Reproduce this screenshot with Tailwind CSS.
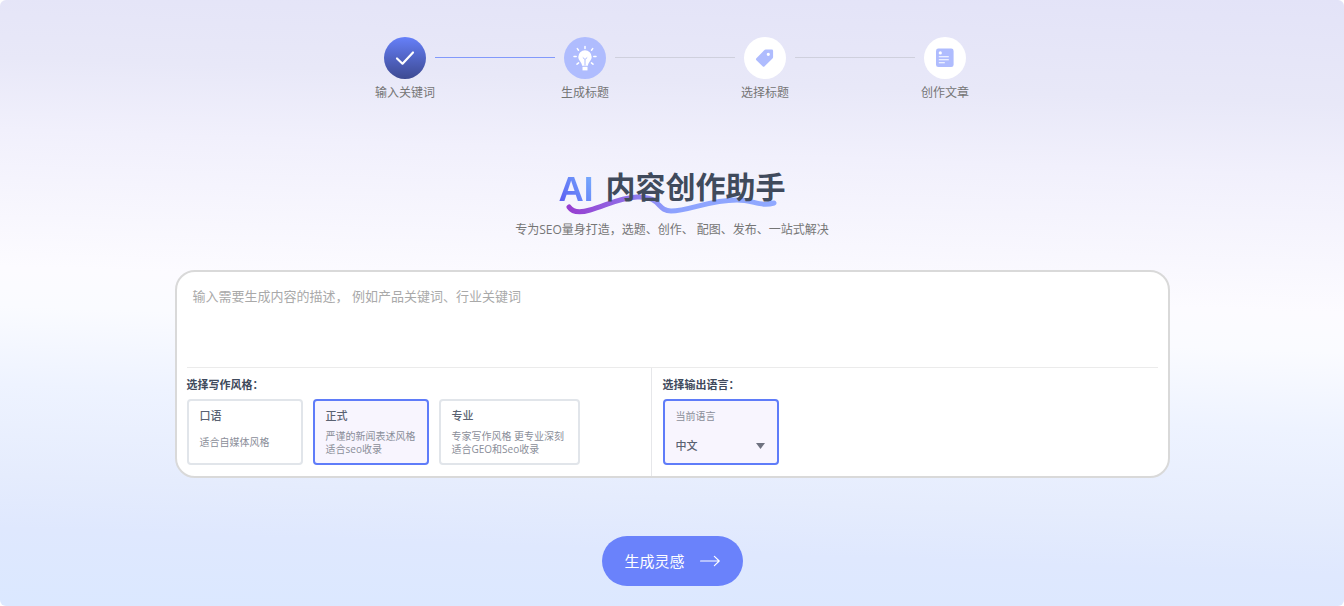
<!DOCTYPE html>
<html lang="zh-CN">
<head>
  <meta charset="UTF-8">
  <meta name="viewport" content="width=device-width, initial-scale=1.0">
  <title>AI 内容创作助手</title>
  <script src="https://cdn.jsdelivr.net/npm/@tailwindcss/browser@4"></script>
</head>
<body class="bg-white font-['Open_Sans','Noto_Sans_CJK_SC',sans-serif]">
  <main class="min-h-screen rounded-md px-6 pt-[37px] pb-5 flex flex-col items-center bg-[linear-gradient(182deg,#e3e3f8_0%,#e8e8f8_16%,#f1f0fc_27%,#fcfbff_48%,#fafbff_54%,#eef3ff_66%,#e5ecfd_80%,#dfe8fe_88%,#dbe8ff_100%)]">

    <!-- 步骤条 -->
    <ol class="flex pl-1.5 text-xs leading-4 text-[#757575]">
      <li class="w-[60px] flex flex-col items-center gap-1.5">
        <span class="size-[42px] rounded-full bg-linear-to-b from-[#6680fa] to-[#3d4a92] flex items-center justify-center">
          <svg class="size-[42px]" viewBox="0 0 42 42" fill="none" stroke="#fff" stroke-width="2.2" stroke-linecap="round" stroke-linejoin="round">
            <path d="M13 21.5l5.5 5.2L29 15.5"/>
          </svg>
        </span>
        <span class="whitespace-nowrap">输入关键词</span>
      </li>
      <li class="w-[120px] h-px mt-5 bg-[#8299fb]" aria-hidden="true"></li>
      <li class="w-[60px] flex flex-col items-center gap-1.5">
        <span class="size-[42px] rounded-full bg-[#afbcfe] flex items-center justify-center">
          <svg class="size-[42px]" viewBox="0 0 42 42" fill="none">
            <path d="M21 13.3a6.7 6.7 0 0 0-6.7 6.7c0 3.6 3.4 5 3.8 8.8h5.8c.4-3.8 3.8-5.2 3.8-8.8A6.7 6.7 0 0 0 21 13.3z" fill="#fff"/>
            <path d="M18.5 29.8h5v3.6h-5z" fill="#fff"/>
            <path d="M18.8 20.5l2.2 2 2.2-2M21 22.5v6" stroke="#afbcfe" stroke-width="1"/>
            <path d="M21 9.4v2M13.3 11.6l1.2 1.6M28.7 11.6l-1.2 1.6M10 19.6h2.2M29.8 19.6h2.2M13 27.2l1.6-1.3M29 27.2l-1.6-1.3" stroke="#fff" stroke-width="1.5" stroke-linecap="round"/>
          </svg>
        </span>
        <span class="whitespace-nowrap">生成标题</span>
      </li>
      <li class="w-[120px] h-px mt-5 bg-[#cfd0dd]" aria-hidden="true"></li>
      <li class="w-[60px] flex flex-col items-center gap-1.5">
        <span class="size-[42px] rounded-full bg-white flex items-center justify-center">
          <svg class="size-[42px]" viewBox="0 0 42 42">
            <path fill="#afbcfe" fill-rule="evenodd" d="M20.2 13.2q.6-.6 1.5-.6h6.1q1.3 0 1.3 1.3v6.2q0 .9-.6 1.5l-7.9 7.7q-1 1-2 0l-6.2-6.1q-1-1 0-2zM25.9 17.3a1.6 1.6 0 1 0-3.2 0 1.6 1.6 0 0 0 3.2 0z"/>
          </svg>
        </span>
        <span class="whitespace-nowrap">选择标题</span>
      </li>
      <li class="w-[120px] h-px mt-5 bg-[#cfd0dd]" aria-hidden="true"></li>
      <li class="w-[60px] flex flex-col items-center gap-1.5">
        <span class="size-[42px] rounded-full bg-white flex items-center justify-center">
          <svg class="size-[42px]" viewBox="0 0 42 42" fill="none">
            <rect x="12" y="11.5" width="17.6" height="18.6" rx="2.4" fill="#afbcfe"/>
            <circle cx="16.3" cy="15.9" r="1.6" fill="#fff"/>
            <path d="M14.8 19.7h10M14.8 22.7h10M14.8 25.7h6" stroke="#fff" stroke-width="1.1"/>
          </svg>
        </span>
        <span class="whitespace-nowrap">创作文章</span>
      </li>
    </ol>

    <!-- 标题 -->
    <h1 class="relative mt-[66px] flex items-center gap-3 h-10 text-[30px] leading-10 font-bold text-[#404a5c]">
      <svg class="absolute left-1 top-6 w-[216px] h-[24px]" viewBox="0 0 216 24" fill="none" aria-hidden="true">
        <defs>
          <linearGradient id="wave" x1="0" y1="0" x2="1" y2="0">
            <stop offset="0" stop-color="#973ed0"/>
            <stop offset=".25" stop-color="#9068e4"/>
            <stop offset=".5" stop-color="#8da2fe"/>
            <stop offset="1" stop-color="#90a9ff"/>
          </linearGradient>
        </defs>
        <path d="M6 16C10 22 17 22 27 19C44 14 56 7 74 6C98 5 94 20 108 20C126 20 146 9 174 9C190 9 198 16 211 12" stroke="url(#wave)" stroke-width="5" stroke-linecap="round"/>
      </svg>
      <span class="relative pt-1 font-['Liberation_Sans',sans-serif] text-[35px] bg-linear-to-tr from-[#5a50ef] to-[#7fbcff] bg-clip-text text-transparent">AI</span>
      <span class="relative">内容创作助手</span>
    </h1>
    <p class="mt-[13px] text-xs leading-5 text-[#757575]">专为SEO量身打造，选题、创作、 配图、发布、一站式解决</p>

    <!-- 输入表单 -->
    <form class="mt-[30px] w-full max-w-[995px] flex flex-col items-center">
      <div class="w-full rounded-[20px] border-2 border-[#d9d9d9] bg-white px-2.5">
        <textarea aria-label="内容描述" placeholder="输入需要生成内容的描述， 例如产品关键词、行业关键词"
                  class="block w-full h-[95px] resize-none px-1.5 pt-3 text-[13px] leading-6 text-[#404a5c] placeholder:text-[#a9a9a9] focus:outline-none"></textarea>

        <div class="flex border-t border-[#ebebeb]">
          <fieldset class="w-[465px] pt-[9px] pb-[11px] border-r border-[#e6e7ea]">
            <legend class="float-left w-full mb-1.5 text-[11px] leading-4 font-bold text-[#404a5c]">选择写作风格：</legend>
            <div class="clear-both flex gap-2.5 text-[10px] leading-[13px] text-[#8a8e99]">
              <label class="w-[116px] h-[66px] rounded-sm border-2 border-[#e1e5ea] px-[11px] pt-[7px] cursor-pointer">
                <input type="radio" name="style" value="casual" class="sr-only">
                <span class="block text-[11px] leading-4 font-medium text-[#5a6272]">口语</span>
                <span class="block mt-3">适合自媒体风格</span>
              </label>
              <label class="w-[116px] h-[66px] rounded-sm border-2 border-[#5f7cf9] bg-[#f8f5fe] px-[11px] pt-[7px] cursor-pointer">
                <input type="radio" name="style" value="formal" class="sr-only" checked>
                <span class="block text-[11px] leading-4 font-medium text-[#5a6272]">正式</span>
                <span class="block mt-1.5">严谨的新闻表述风格<br>适合seo收录</span>
              </label>
              <label class="w-[141px] h-[66px] rounded-sm border-2 border-[#e1e5ea] px-[11px] pt-[7px] cursor-pointer">
                <input type="radio" name="style" value="pro" class="sr-only">
                <span class="block text-[11px] leading-4 font-medium text-[#5a6272]">专业</span>
                <span class="block mt-1.5 whitespace-nowrap">专家写作风格 更专业深刻<br>适合GEO和Seo收录</span>
              </label>
            </div>
          </fieldset>

          <div class="flex-1 pl-[11px] pt-[9px] pb-[11px]">
            <h2 class="mb-1.5 text-[11px] leading-4 font-bold text-[#404a5c]">选择输出语言：</h2>
            <div class="relative w-[116px] h-[66px] rounded-sm border-2 border-[#5f7cf9] bg-[#f8f5fe] px-[11px] pt-[7px]">
              <label for="lang" class="block text-[10px] leading-4 text-[#8a8e99]">当前语言</label>
              <select id="lang" class="mt-3.5 block w-full appearance-none text-[11px] leading-4 font-medium text-[#5a6272] focus:outline-none">
                <option>中文</option>
                <option>English</option>
              </select>
              <svg class="absolute right-3 bottom-3.5 w-[9px] h-[6px] pointer-events-none" viewBox="0 0 9 6" aria-hidden="true">
                <path d="M0 0h9L4.5 6z" fill="#6f7280"/>
              </svg>
            </div>
          </div>
        </div>
      </div>

      <button type="button" class="mt-[58px] w-[141px] h-[50px] rounded-full bg-[#6a82fb] hover:bg-[#5a73f5] text-white text-[15px] flex items-center justify-center gap-[15px] cursor-pointer">
        生成灵感
        <svg class="w-5 h-3" viewBox="0 0 20 12" fill="none" stroke="#fff" stroke-width="1.2" stroke-linecap="round" stroke-linejoin="round">
          <path d="M.6 6h18.6M14.4 1.4L19.2 6l-4.8 4.6"/>
        </svg>
      </button>
    </form>
  </main>
</body>
</html>
